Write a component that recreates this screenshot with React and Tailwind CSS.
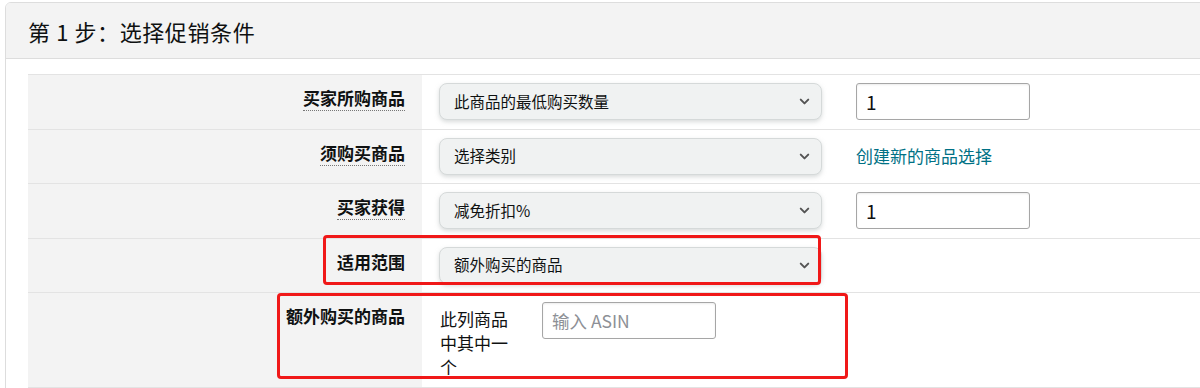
import React from "react";
import { ChevronDown } from "lucide-react";

const FONT = { fontFamily: '"Noto Sans CJK SC", "Noto Sans", sans-serif' };

function Select({ text }) {
  return (
    <div className="w-[383px] h-[37px] rounded-[8px] border border-[#d5d9d9] bg-[#f0f2f2] shadow-[0_2px_4px_rgba(180,186,186,0.5)] flex items-center justify-between pl-[14px] pr-[9px]">
      <span className="text-[15.5px] text-[#0f1111] leading-none">{text}</span>
      <ChevronDown size={15} strokeWidth={3.2} className="text-[#555]" />
    </div>
  );
}

function Input({ value, placeholder }) {
  return (
    <div className="w-[174px] h-[37px] rounded-[3px] border border-[#a6a6a6] bg-white shadow-[inset_0_1px_2px_rgba(0,0,0,0.08)] flex items-center pl-[9px]">
      {value ? (
        <span className="text-[19px] text-[#0f1111] leading-none">{value}</span>
      ) : (
        <span className="text-[17.5px] text-[#8d9096] leading-none">{placeholder}</span>
      )}
    </div>
  );
}

function Row({ label, underline, h, children, alignTop }) {
  return (
    <div
      className="grid grid-cols-[394px_1fr] border-t border-[#e3e3e3]"
      style={{ height: h }}
    >
      <div className="bg-[#f3f3f3] flex justify-end pr-[17px] pt-[11px]">
        <span
          className={
            "text-[17px] font-bold text-[#0f1111] leading-[23px] h-[25px] " +
            (underline ? "border-b border-dotted border-[#777]" : "")
          }
        >
          {label}
        </span>
      </div>
      <div
        className={
          "flex pl-[17px] " + (alignTop ? "items-start pt-[9px]" : "items-center pb-[1px]")
        }
      >
        {children}
      </div>
    </div>
  );
}

export default function App() {
  return (
    <div
      className="relative w-[1200px] h-[388px] overflow-hidden bg-white pt-[2px] pl-[5px]"
      style={FONT}
    >
      <div className="w-[1240px] h-[420px] border border-[#dddddd] rounded-tl-[6px] overflow-hidden">
        <div className="h-[56px] bg-[#f3f3f3] border-b border-[#dddddd] flex items-center pl-[22px]">
          <span className="text-[22px] tracking-[0.6px] text-[#0f1111] leading-none">第 1 步：选择促销条件</span>
        </div>
        <div className="pt-[15px] pl-[22px]">
          <div className="border-b border-[#e3e3e3]">
            <Row label="买家所购商品" underline h={55}>
              <Select text="此商品的最低购买数量" />
              <div className="ml-[34px]">
                <Input value="1" />
              </div>
            </Row>
            <Row label="须购买商品" underline h={54}>
              <Select text="选择类别" />
              <span className="ml-[34px] text-[17px] text-[#007185]">创建新的商品选择</span>
            </Row>
            <Row label="买家获得" underline h={55}>
              <Select text="减免折扣%" />
              <div className="ml-[34px]">
                <Input value="1" />
              </div>
            </Row>
            <Row label="适用范围" h={54}>
              <Select text="额外购买的商品" />
            </Row>
            <Row label="额外购买的商品" h={95} alignTop>
              <div className="w-[72px] text-[17px] leading-[24px] text-[#0f1111] pt-[5px] pl-[1px]">
                此列商品中其中一个
              </div>
              <div className="ml-[31px]">
                <Input placeholder="输入 ASIN" />
              </div>
            </Row>
          </div>
        </div>
      </div>
      <div className="absolute left-[323px] top-[235px] w-[498px] h-[50px] border-[3px] border-[#f01818] rounded-[4px]" />
      <div className="absolute left-[277px] top-[293px] w-[571px] h-[86px] border-[3px] border-[#f01818] rounded-[4px]" />
    </div>
  );
}
